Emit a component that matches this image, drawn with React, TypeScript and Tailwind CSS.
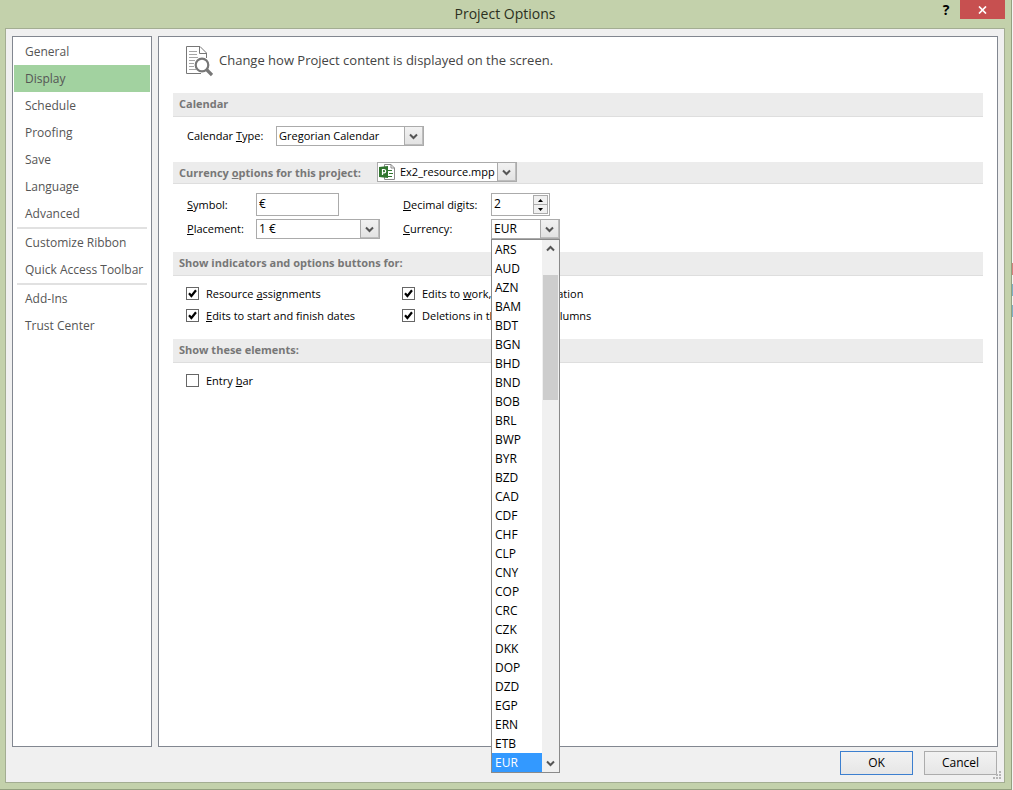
import { useId, useState } from "react";
import type { ReactNode } from "react";

const navGroups = [
  ["General", "Display", "Schedule", "Proofing", "Save", "Language", "Advanced"],
  ["Customize Ribbon", "Quick Access Toolbar"],
  ["Add-Ins", "Trust Center"],
];

const currencies = [
  "ARS", "AUD", "AZN", "BAM", "BDT", "BGN", "BHD", "BND", "BOB", "BRL",
  "BWP", "BYR", "BZD", "CAD", "CDF", "CHF", "CLP", "CNY", "COP", "CRC",
  "CZK", "DKK", "DOP", "DZD", "EGP", "ERN", "ETB", "EUR",
];

function Chevron({ up = false }: { up?: boolean }) {
  return (
    <svg width="9" height="7" viewBox="0 0 9 7" fill="none" stroke="#555" strokeWidth="2" aria-hidden="true">
      <path d={up ? "M1 5.5 L4.5 2 L8 5.5" : "M1 1.5 L4.5 5 L8 1.5"} />
    </svg>
  );
}

function Combo({
  id,
  value,
  options,
  className,
  icon,
}: {
  id: string;
  value: string;
  options?: string[];
  className: string;
  icon?: ReactNode;
}) {
  return (
    <div className={`relative flex h-5 border border-[#ababab] bg-white ${className}`}>
      {icon}
      <select
        id={id}
        defaultValue={value}
        className="h-full min-w-0 flex-1 appearance-none bg-transparent pl-0.5 leading-[18px] outline-none"
      >
        {(options ?? [value]).map((o) => (
          <option key={o}>{o}</option>
        ))}
      </select>
      <span className="pointer-events-none flex w-[19px] shrink-0 items-center justify-center border-l border-[#ababab] bg-linear-to-b from-[#f2f2f2] to-[#e2e2e2] pr-px shadow-[inset_-1px_-1px_0_#bdbdbd]">
        <Chevron />
      </span>
    </div>
  );
}

function SectionBar({ children }: { children: ReactNode }) {
  return (
    <h2 className="flex h-6 items-center border-b border-[#dedede] bg-[#ececec] px-1.5 text-[11px] font-bold text-[#777]">
      {children}
    </h2>
  );
}

function Check({ children, checked = false }: { children: ReactNode; checked?: boolean }) {
  const id = useId();
  return (
    <div className="flex h-[22px] items-center gap-[7px]">
      <span className="relative mb-0.5 flex size-[13px] shrink-0">
        <input
          id={id}
          type="checkbox"
          defaultChecked={checked}
          className="peer size-[13px] appearance-none border border-[#666] bg-white"
        />
        <svg
          viewBox="0 0 13 13"
          className="pointer-events-none absolute inset-0 hidden size-[13px] peer-checked:block"
          fill="none"
          stroke="#000"
          strokeWidth="2.2"
          aria-hidden="true"
        >
          <path d="M3 6.3 L5.4 9 L10 3.3" />
        </svg>
      </span>
      <label htmlFor={id} className="whitespace-nowrap">
        {children}
      </label>
    </div>
  );
}

function PageSearchIcon() {
  return (
    <svg width="28" height="31" viewBox="0 1 28 31" fill="none" stroke="#777" aria-hidden="true">
      <path d="M16 28.5 H1.5 V1.5 H15 L21.5 8 V13" />
      <path d="M14.5 1.5 V8.5 H21.5" />
      <path d="M4 6.5 H12 M4 9.5 H12 M4 12.5 H13 M4 15.5 H10 M4 18.5 H9 M4 21.5 H9 M4 24.5 H11" stroke="#a5a5a5" />
      <circle cx="17" cy="20" r="6.3" fill="#fff" strokeWidth="2.2" />
      <path d="M21.5 24.5 L27 30" strokeWidth="3.2" />
    </svg>
  );
}

function ProjectFileIcon() {
  return (
    <svg width="16" height="16" viewBox="0 0 16 16" className="mr-[3px] ml-px shrink-0 self-center" fill="none" aria-hidden="true">
      <path d="M5.5 .5 H12 L15.5 4 V15.5 H5.5 Z" fill="#fff" stroke="#8a8a8a" />
      <path d="M12 .5 V4 H15.5" stroke="#8a8a8a" />
      <path d="M9 6.5 H13 M10 9.5 H14 M9 12.5 H13" stroke="#31752f" />
      <path d="M0 3 L9 2 V14 L0 13 Z" fill="#31752f" />
      <path d="M3.5 11 V5.5 H5 A1.5 1.5 0 0 1 5 8.8 H3.5" stroke="#fff" strokeWidth="1.2" />
    </svg>
  );
}

function CurrencyList() {
  const [selected, setSelected] = useState("EUR");
  return (
    <div className="absolute top-full left-0 z-10 flex w-full border border-[#8a8a8a] bg-white text-xs">
      <ul role="listbox" aria-label="Currency" className="flex-1">
        {currencies.map((c) => (
          <li
            key={c}
            role="option"
            aria-selected={c === selected}
            onClick={() => setSelected(c)}
            className={
              c === selected
                ? "h-[19px] bg-[#3399ff] pl-[3px] leading-[19px] text-white"
                : "h-[19px] pl-[3px] leading-[19px]"
            }
          >
            {c}
          </li>
        ))}
      </ul>
      <div className="flex w-[17px] flex-col items-center bg-[#f0f0f0]">
        <span className="flex h-[17px] items-center">
          <Chevron up />
        </span>
        <span className="mt-[18px] h-[125px] w-[15px] bg-[#cdcdcd]" />
        <span className="mt-auto flex h-[17px] items-center">
          <Chevron />
        </span>
      </div>
    </div>
  );
}

export default function App() {
  const [page, setPage] = useState("Display");
  return (
    <div className="flex min-h-screen bg-[#f4f4f4] font-['Open_Sans','Noto_Sans',sans-serif] text-xs text-black">
      <div className="flex min-w-0 flex-1 flex-col border-r border-b border-[#93a07f] bg-[#c3d1ab] pr-1.5 pb-1.5 pl-[5px]">
        <header className="relative flex h-7 items-center justify-center">
          <h1 className="text-sm text-[#2b3020]">Project Options</h1>
          <div className="absolute top-0 right-0 flex items-start">
            <button type="button" aria-label="Help" className="h-[19px] w-7 text-sm leading-[19px] font-bold">
              ?
            </button>
            <button type="button" aria-label="Close" className="flex h-[19px] w-[45px] items-center justify-center bg-[#c75050]">
              <svg width="9" height="8" viewBox="0 0 9 8" stroke="#fff" strokeWidth="1.7" aria-hidden="true">
                <path d="M1 .5 L8 7.5 M8 .5 L1 7.5" />
              </svg>
            </button>
          </div>
        </header>

        <div className="flex flex-1 flex-col border border-[#a3ad92] bg-[#f0f0f0] px-1.5 pt-[7px]">
          <div className="flex flex-1 gap-1.5">
            <nav className="w-[140px] shrink-0 border border-[#828790] bg-white p-px text-[#555]">
              {navGroups.map((group, i) => (
                <div key={group[0]}>
                  {i > 0 && <hr className="mx-[3px] border-t-2 border-[#e1e1e1]" />}
                  {group.map((name) => (
                    <button
                      key={name}
                      type="button"
                      onClick={() => setPage(name)}
                      className={
                        name === page
                          ? "block h-[27px] w-full bg-[#a2d2a0] pl-[11px] text-left whitespace-nowrap"
                          : "block h-[27px] w-full bg-white pl-[11px] text-left whitespace-nowrap"
                      }
                    >
                      {name}
                    </button>
                  ))}
                </div>
              ))}
            </nav>

            <main className="min-w-0 flex-1 border border-[#828790] bg-white px-3.5 text-[11px]">
              <div className="flex h-14 items-center gap-1.5 pb-2 pl-3 text-[#444]">
                <PageSearchIcon />
                <p className="text-[13px]">Change how Project content is displayed on the screen.</p>
              </div>

              <SectionBar>Calendar</SectionBar>
              <div className="flex h-[45px] items-center pb-[7px] pl-3.5">
                <label htmlFor="calendar" className="w-[89px]">
                  Calendar <u>T</u>ype:
                </label>
                <Combo id="calendar" value="Gregorian Calendar" className="w-[148px]" />
              </div>

              <div className="flex h-[22px] items-start border-b border-[#dedede] bg-[#ececec] pl-1.5">
                <label htmlFor="project" className="w-[198px] leading-[21px] font-bold whitespace-nowrap text-[#777]">
                  Currency <u>o</u>ptions for this project:
                </label>
                <Combo id="project" value="Ex2_resource.mpp" className="w-[140px]" icon={<ProjectFileIcon />} />
              </div>

              <div className="grid grid-cols-[69px_147px_88px_69px] gap-y-[3px] pt-[9px] pb-[13px] pl-3.5">
                <label htmlFor="symbol" className="leading-[23px]">
                  <u>S</u>ymbol:
                </label>
                <input
                  id="symbol"
                  type="text"
                  defaultValue="€"
                  className="h-[23px] w-[83px] border border-[#ababab] bg-white px-0.5 pb-0.5 text-xs outline-none"
                />
                <label htmlFor="digits" className="leading-[23px]">
                  <u>D</u>ecimal digits:
                </label>
                <div className="flex h-[23px] w-[59px] border border-[#ababab] bg-white p-px">
                  <input
                    id="digits"
                    type="text"
                    inputMode="numeric"
                    defaultValue="2"
                    className="min-w-0 flex-1 pb-0.5 pl-px text-xs outline-none"
                  />
                  <div className="flex w-[15px] flex-col">
                    <button
                      type="button"
                      aria-label="Increase"
                      className="flex flex-1 items-center justify-center border border-[#ababab] bg-[#f0f0f0]"
                    >
                      <svg width="5" height="3" viewBox="0 0 5 3" aria-hidden="true">
                        <path d="M0 3 L2.5 0 L5 3 Z" />
                      </svg>
                    </button>
                    <button
                      type="button"
                      aria-label="Decrease"
                      className="flex flex-1 items-center justify-center border border-t-0 border-[#ababab] bg-[#f0f0f0]"
                    >
                      <svg width="5" height="3" viewBox="0 0 5 3" aria-hidden="true">
                        <path d="M0 0 L2.5 3 L5 0 Z" />
                      </svg>
                    </button>
                  </div>
                </div>
                <label htmlFor="placement" className="leading-5">
                  <u>P</u>lacement:
                </label>
                <Combo id="placement" value="1 €" className="w-[124px] text-xs" />
                <label htmlFor="currency" className="leading-5">
                  <u>C</u>urrency:
                </label>
                <div className="relative">
                  <Combo id="currency" value="EUR" options={currencies} className="w-full text-xs" />
                  <CurrencyList />
                </div>
              </div>

              <SectionBar>Show indicators and options buttons for:</SectionBar>
              <div className="grid grid-cols-[216px_auto] justify-start pt-[7px] pb-3 pl-[13px]">
                <Check checked>
                  Resource <u>a</u>ssignments
                </Check>
                <Check checked>
                  Edits to <u>w</u>ork, units, or duration
                </Check>
                <Check checked>
                  <u>E</u>dits to start and finish dates
                </Check>
                <Check checked>
                  Deletions in the "<u>N</u>ame" columns
                </Check>
              </div>

              <SectionBar>Show these elements:</SectionBar>
              <div className="pt-[7px] pl-[13px]">
                <Check>
                  Entry <u>b</u>ar
                </Check>
              </div>
            </main>
          </div>

          <footer className="relative flex h-[35px] justify-end gap-[11px] pt-1 pr-px">
            <button
              type="button"
              className="h-6 w-[73px] border border-[#3c7fcf] bg-linear-to-b from-[#f2f2f2] to-[#e6e6e6]"
            >
              OK
            </button>
            <button
              type="button"
              className="h-6 w-[73px] border border-[#acacac] bg-linear-to-b from-[#f2f2f2] to-[#e6e6e6]"
            >
              Cancel
            </button>
            <svg
              width="9"
              height="9"
              viewBox="0 0 9 9"
              fill="#b5b5b5"
              className="absolute -right-1 bottom-0.5"
              aria-hidden="true"
            >
              <path d="M6 0h2v2h-2z M6 3h2v2h-2z M6 6h2v2h-2z M3 3h2v2h-2z M3 6h2v2h-2z M0 6h2v2h-2z" />
            </svg>
          </footer>
        </div>
      </div>
      {/* Sliver of the window behind the dialog */}
      <div className="flex w-px flex-col gap-[9px] pt-[263px]">
        <span className="h-3 bg-[#d98080]" />
        <span className="h-3 bg-[#7fb0c8]" />
        <span className="h-3 bg-[#7fb0c8]" />
      </div>
    </div>
  );
}
